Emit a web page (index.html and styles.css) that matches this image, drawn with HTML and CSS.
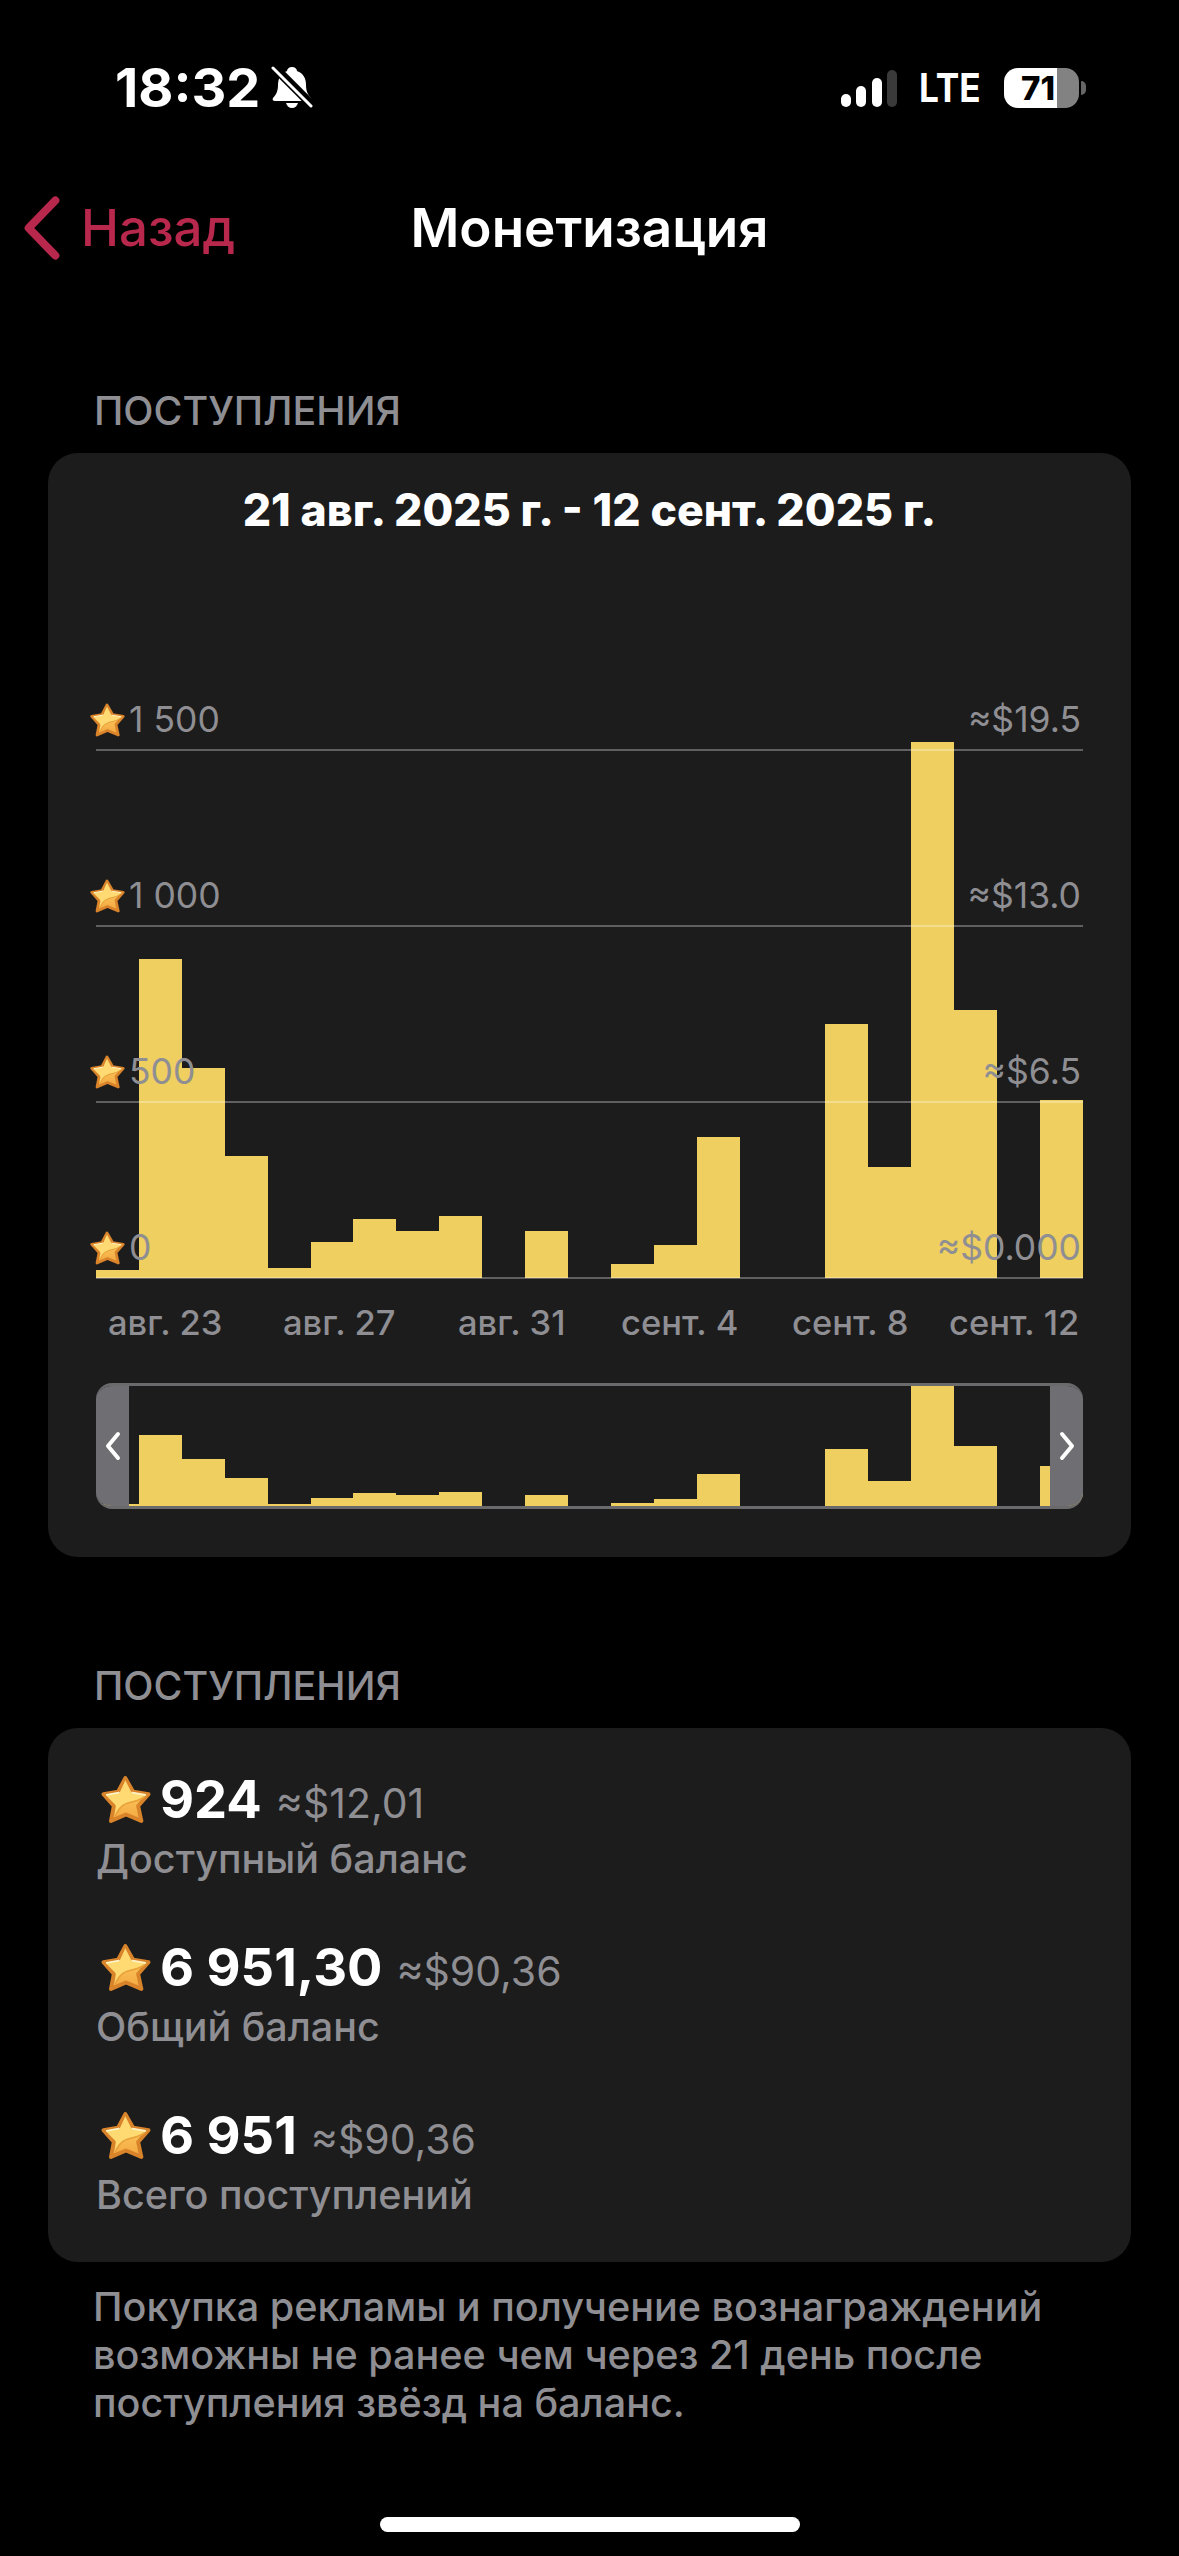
FILE: index.html
```html
<!DOCTYPE html>
<html lang="ru">
<head>
  <meta charset="UTF-8">
  <meta name="viewport" content="width=device-width, initial-scale=1.0">
  <title>Монетизация</title>
  <link rel="stylesheet" href="styles.css">
</head>
<body>
  <svg class="defs" width="0" height="0">
    <defs>
      <linearGradient id="starFill" x1="0" y1="0" x2="0" y2="1">
        <stop offset="0" stop-color="#ffd56e"/>
        <stop offset="1" stop-color="#f3a83f"/>
      </linearGradient>
      <symbol id="star" viewBox="0 0 140 136">
        <path d="M68 8 L90 46 L133 53 L104 86 L113 128 L70 110 L28 128 L36 86 L7 53 L48 46 Z" fill="url(#starFill)" stroke="#d9842a" stroke-width="11" stroke-linejoin="round"/>
        <path d="M68 14 L86 50 L126 56 C110 72 88 70 66 80 C52 87 44 98 38 114 L42 86 C38 78 24 68 14 56 L52 50 Z" fill="#ffd972"/>
        <path d="M16 55 L50 49 M88 49 L124 55" stroke="#fff4c8" stroke-width="5" stroke-linecap="round"/>
        <path d="M122 60 C104 76 84 72 66 82 C54 88 46 100 40 116" fill="none" stroke="#e9a23a" stroke-width="4"/>
      </symbol>
    </defs>
  </svg>

  <div class="screen">
    <div class="status">
      <div class="status-left">
        <span class="time">18:32</span>
        <svg class="bell" viewBox="0 0 42 42">
          <path d="M21 1 C24 1 26 3 26 5 C32 7 35 12 35 19 C35 25 37 29 40 32 C41 34 40 35 38 35 L4 35 C2 35 1 34 2 32 C5 29 7 25 7 19 C7 12 10 7 16 5 C16 3 18 1 21 1 Z M15 37 L27 37 C26 40 24 42 21 42 C18 42 16 40 15 37 Z" fill="#fff"/>
          <path d="M2 0 L42 40" stroke="#000" stroke-width="9"/>
          <path d="M2 2 L40 40" stroke="#fff" stroke-width="3" stroke-linecap="round"/>
        </svg>
      </div>
      <div class="status-right">
        <div class="signal">
          <i class="sig sig-1"></i><i class="sig sig-2"></i><i class="sig sig-3"></i><i class="sig sig-4"></i>
        </div>
        <span class="lte">LTE</span>
        <div class="battery"><span>71</span></div>
        <i class="battery-nub"></i>
      </div>
    </div>

    <div class="nav">
      <div class="back">
        <svg class="back-icon" viewBox="0 0 40 66">
          <path d="M34 4 L6 33 L34 62" fill="none" stroke="#b8284c" stroke-width="8.5" stroke-linecap="round" stroke-linejoin="round"/>
        </svg>
        <span>Назад</span>
      </div>
      <div class="nav-title">Монетизация</div>
    </div>

    <div class="section-label first">ПОСТУПЛЕНИЯ</div>
    <div class="card chart-card">
      <div class="chart-title">21 авг. 2025 г. - 12 сент. 2025 г.</div>

      <div class="plot">
        <div class="bars">
          <i style="height:8px"></i>
          <i style="height:319px"></i>
          <i style="height:210px"></i>
          <i style="height:122px"></i>
          <i style="height:10px"></i>
          <i style="height:36px"></i>
          <i style="height:59px"></i>
          <i style="height:47px"></i>
          <i style="height:62px"></i>
          <i style="height:0"></i>
          <i style="height:47px"></i>
          <i style="height:0"></i>
          <i style="height:14px"></i>
          <i style="height:33px"></i>
          <i style="height:141px"></i>
          <i style="height:0"></i>
          <i style="height:0"></i>
          <i style="height:254px"></i>
          <i style="height:111px"></i>
          <i style="height:536px"></i>
          <i style="height:268px"></i>
          <i style="height:0"></i>
          <i style="height:178px"></i>
        </div>
        <div class="grid">
          <div class="grid-row top">
            <span class="tick"><svg class="tick-star"><use href="#star"/></svg>1 500</span>
            <span class="usd">≈$19.5</span>
          </div>
          <div class="grid-row">
            <span class="tick"><svg class="tick-star"><use href="#star"/></svg>1 000</span>
            <span class="usd">≈$13.0</span>
          </div>
          <div class="grid-row">
            <span class="tick"><svg class="tick-star"><use href="#star"/></svg>500</span>
            <span class="usd">≈$6.5</span>
          </div>
          <div class="grid-row">
            <span class="tick"><svg class="tick-star"><use href="#star"/></svg>0</span>
            <span class="usd">≈$0.000</span>
          </div>
        </div>
      </div>

      <div class="x-axis">
        <span>авг. 23</span>
        <span>авг. 27</span>
        <span>авг. 31</span>
        <span>сент. 4</span>
        <span>сент. 8</span>
        <span>сент. 12</span>
      </div>

      <div class="mini">
        <div class="bars">
          <i style="height:2px"></i>
          <i style="height:71px"></i>
          <i style="height:47px"></i>
          <i style="height:28px"></i>
          <i style="height:2px"></i>
          <i style="height:8px"></i>
          <i style="height:13px"></i>
          <i style="height:11px"></i>
          <i style="height:14px"></i>
          <i style="height:0"></i>
          <i style="height:11px"></i>
          <i style="height:0"></i>
          <i style="height:3px"></i>
          <i style="height:7px"></i>
          <i style="height:32px"></i>
          <i style="height:0"></i>
          <i style="height:0"></i>
          <i style="height:57px"></i>
          <i style="height:25px"></i>
          <i style="height:120px"></i>
          <i style="height:60px"></i>
          <i style="height:0"></i>
          <i style="height:40px"></i>
        </div>
        <div class="handle handle-left">
          <svg viewBox="0 0 16 30"><path d="M13 3 L3 15 L13 27" fill="none" stroke="#fff" stroke-width="4" stroke-linecap="round" stroke-linejoin="round"/></svg>
        </div>
        <div class="handle handle-right">
          <svg viewBox="0 0 16 30"><path d="M3 3 L13 15 L3 27" fill="none" stroke="#fff" stroke-width="4" stroke-linecap="round" stroke-linejoin="round"/></svg>
        </div>
      </div>
    </div>

    <div class="section-label second">ПОСТУПЛЕНИЯ</div>
    <div class="card balance-card">
      <div class="balance">
        <div class="balance-top">
          <svg class="balance-star"><use href="#star"/></svg>
          <span class="amount">924</span>
          <span class="approx">≈$12,01</span>
        </div>
        <div class="balance-label">Доступный баланс</div>
      </div>
      <div class="balance">
        <div class="balance-top">
          <svg class="balance-star"><use href="#star"/></svg>
          <span class="amount">6 951,30</span>
          <span class="approx">≈$90,36</span>
        </div>
        <div class="balance-label">Общий баланс</div>
      </div>
      <div class="balance">
        <div class="balance-top">
          <svg class="balance-star"><use href="#star"/></svg>
          <span class="amount">6 951</span>
          <span class="approx">≈$90,36</span>
        </div>
        <div class="balance-label">Всего поступлений</div>
      </div>
    </div>

    <p class="note">Покупка рекламы и получение вознаграждений<br>возможны не ранее чем через 21 день после<br>поступления звёзд на баланс.</p>

    <div class="home-bar"></div>
  </div>
</body>
</html>
```

FILE: styles.css
```css
html, body {
  margin: 0;
  padding: 0;
  background-color: #000;
}

body {
  font-family: 'Inter', 'Noto Sans', sans-serif;
  color: #fff;
}

.defs {
  position: absolute;
}

.screen {
  position: relative;
  width: 1179px;
  height: 2556px;
  overflow: hidden;
}

/* Status bar */
.status {
  display: flex;
  justify-content: space-between;
  height: 52px;
  padding: 62px 93px 0 115px;
}

.status-left {
  display: flex;
  align-items: center;
  gap: 11px;
}

.time {
  font-size: 54px;
  font-weight: 700;
  line-height: 52px;
}

.bell {
  width: 42px;
  height: 42px;
  margin-top: -2px;
}

.status-right {
  display: flex;
  align-items: center;
}

.signal {
  display: flex;
  align-items: flex-end;
  gap: 5.5px;
  height: 38px;
  margin-right: 22px;
}

.sig {
  display: block;
  width: 10px;
  border-radius: 5px;
  background-color: #fff;
}

.sig-1 { height: 13px; }
.sig-2 { height: 21px; }
.sig-3 { height: 29px; }
.sig-4 { height: 37px; background-color: #3a3a3a; }

.lte {
  width: 62px;
  margin-right: 23px;
  font-size: 40px;
  font-weight: 700;
  line-height: 52px;
  transform: scaleX(0.88);
  transform-origin: left center;
}

.battery {
  width: 75px;
  height: 40px;
  border-radius: 14px;
  background: linear-gradient(to right, #fff 53px, #828282 53px);
  color: #000;
  font-size: 33px;
  font-weight: 800;
  line-height: 40px;
}

.battery span {
  display: block;
  padding-left: 17px;
}

.battery-nub {
  display: block;
  width: 5px;
  height: 14px;
  margin-left: 2px;
  border-radius: 0 7px 7px 0;
  background-color: #666;
}

/* Nav */
.nav {
  position: relative;
  display: flex;
  justify-content: center;
  height: 64px;
  margin-top: 82px;
}

.back {
  position: absolute;
  left: 23px;
  top: 0;
  display: flex;
  align-items: center;
  gap: 20px;
  color: #b8284c;
  font-size: 51px;
  font-weight: 500;
  line-height: 64px;
}

.back-icon {
  width: 38px;
  height: 64px;
}

.nav-title {
  font-size: 53px;
  font-weight: 600;
  line-height: 64px;
}

.section-label {
  padding-left: 94px;
  color: #8e8e93;
  font-size: 39.4px;
  font-weight: 500;
  line-height: 40px;
}

.section-label.first {
  margin-top: 131px;
}

.section-label.second {
  margin-top: 109px;
}

.card {
  margin: 22px 48px 0;
  border-radius: 30px;
  background-color: #1c1c1c;
}

/* Chart card */
.chart-card {
  padding: 27px 48px 48px;
}

.chart-title {
  font-size: 44.6px;
  font-weight: 800;
  line-height: 60px;
  text-align: center;
}

.plot {
  position: relative;
  height: 589px;
  margin-top: 150px;
}

.bars {
  display: flex;
  align-items: flex-end;
  height: 100%;
}

.bars i {
  display: block;
  flex: 1;
  background-color: #efcf5f;
}

.plot .bars {
  height: 588px;
}

.grid {
  position: absolute;
  left: 0;
  right: 0;
  bottom: 0;
}

.grid-row {
  display: flex;
  justify-content: space-between;
  align-items: flex-end;
  height: 174px;
  padding-bottom: 9px;
  margin-top: -8px;
  border-bottom: 2px solid rgba(255, 255, 255, 0.3);
  color: #8e8e93;
  font-size: 35.5px;
  line-height: 40px;
}

.grid-row + .grid-row {
  margin-top: 0;
  height: 165px;
}

.grid-row.top {
  height: 50px;
  margin-top: 0;
}

.tick {
  display: flex;
  align-items: center;
  margin-left: -6px;
}

.tick-star {
  width: 35px;
  height: 34px;
  margin-right: 4px;
}

.usd {
  padding-right: 2px;
}

.x-axis {
  display: grid;
  grid-template-columns: 175px 175px 163px 171px 157px auto;
  margin-top: 24px;
  padding-left: 12px;
  color: #8e8e93;
  font-size: 34.5px;
  font-weight: 500;
  line-height: 40px;
}

/* Range picker */
.mini {
  position: relative;
  height: 120px;
  margin-top: 40px;
  border-top: 3px solid #6a6a6c;
  border-bottom: 3px solid #6a6a6c;
  border-radius: 16px;
  overflow: hidden;
}

.handle {
  position: absolute;
  top: -3px;
  bottom: -3px;
  display: flex;
  align-items: center;
  justify-content: center;
  width: 33px;
  background-color: #6f6f73;
}

.handle svg {
  width: 16px;
  height: 30px;
}

.handle-left {
  left: 0;
}

.handle-right {
  right: 0;
}

/* Balances */
.balance-card {
  padding: 41px 48px 53px;
}

.balance {
  height: 104px;
  margin-bottom: 64px;
}

.balance:last-child {
  margin-bottom: 0;
}

.balance-top {
  display: flex;
  align-items: baseline;
  height: 60px;
  line-height: 60px;
}

.balance-star {
  align-self: center;
  width: 50px;
  height: 49px;
  margin: 0 9px 0 5px;
}

.amount {
  font-size: 52.5px;
  font-weight: 700;
}

.approx {
  margin-left: 14px;
  color: #8e8e93;
  font-size: 41px;
}

.balance-label {
  margin-top: 8px;
  color: #8e8e93;
  font-size: 39.5px;
  font-weight: 500;
  line-height: 44px;
}

.note {
  margin: 21px 0 0;
  padding-left: 93px;
  color: #8e8e93;
  font-size: 39.6px;
  font-weight: 500;
  line-height: 48px;
}

.home-bar {
  position: absolute;
  left: 380px;
  bottom: 24px;
  width: 420px;
  height: 15px;
  border-radius: 8px;
  background-color: #fff;
}
```
